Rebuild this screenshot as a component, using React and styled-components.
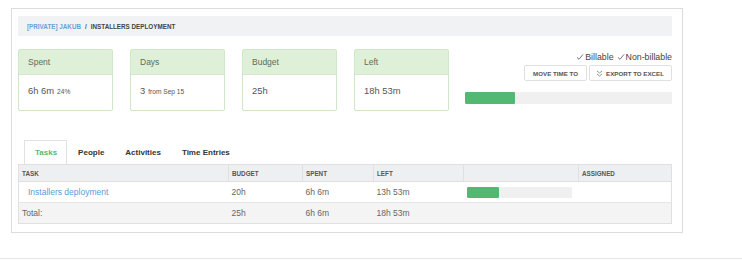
import React from 'react';
import styled, { createGlobalStyle } from 'styled-components';

const GlobalStyle = createGlobalStyle`
  html, body {
    margin: 0;
    padding: 0;
    background: #ffffff;
    font-family: "Liberation Sans", Arial, sans-serif;
    color: #555;
  }
`;

const stats = [
  { title: 'Spent', value: '6h 6m', note: '24%' },
  { title: 'Days', value: '3', note: 'from Sep 15' },
  { title: 'Budget', value: '25h' },
  { title: 'Left', value: '18h 53m' },
];

const tabs = ['Tasks', 'People', 'Activities', 'Time Entries'];

const CheckIcon = () => (
  <svg width="8" height="8" viewBox="0 0 8 8" fill="none">
    <path d="M1 4.4 L3 6.3 L7 1.4" stroke="#777" strokeWidth="1" />
  </svg>
);

const ChevronsDown = () => (
  <svg width="7" height="7" viewBox="0 0 7 7" fill="none">
    <path d="M1 1 L3.5 3 L6 1 M1 4 L3.5 6 L6 4" stroke="#888" strokeWidth="0.9" />
  </svg>
);

const App = () => {
  return (
    <Page>
      <GlobalStyle />
      <Panel>
        <Breadcrumb>
          <Crumb href="#">[PRIVATE] JAKUB</Crumb>
          <Sep>/</Sep>
          <Current>INSTALLERS DEPLOYMENT</Current>
        </Breadcrumb>

        <Summary>
          <Cards>
            {stats.map((s) => (
              <Card key={s.title}>
                <CardHead>{s.title}</CardHead>
                <CardBody>
                  {s.value}
                  {s.note && <Small>{s.note}</Small>}
                </CardBody>
              </Card>
            ))}
          </Cards>

          <Side>
            <Filters>
              <Check><CheckIcon />Billable</Check>
              <Check><CheckIcon />Non-billable</Check>
            </Filters>
            <Buttons>
              <Button>MOVE TIME TO</Button>
              <Button $icon><ChevronsDown />EXPORT TO EXCEL</Button>
            </Buttons>
            <Progress $h={12}>
              <Fill style={{ width: '24%' }} />
            </Progress>
          </Side>
        </Summary>

        <Tabs>
          {tabs.map((t, i) => (
            <Tab key={t} $active={i === 0}>{t}</Tab>
          ))}
        </Tabs>

        <Table>
          <colgroup>
            <col style={{ width: 210 }} />
            <col style={{ width: 74 }} />
            <col style={{ width: 71 }} />
            <col style={{ width: 90 }} />
            <col style={{ width: 115 }} />
            <col />
          </colgroup>
          <thead>
            <tr>
              <Th>TASK</Th>
              <Th>BUDGET</Th>
              <Th>SPENT</Th>
              <Th>LEFT</Th>
              <Th />
              <Th>ASSIGNED</Th>
            </tr>
          </thead>
          <tbody>
            <tr>
              <Td><TaskLink href="#">Installers deployment</TaskLink></Td>
              <Td>20h</Td>
              <Td>6h 6m</Td>
              <Td>13h 53m</Td>
              <Td>
                <Progress $h={11} $w={105}>
                  <Fill style={{ width: '31%' }} />
                </Progress>
              </Td>
              <Td />
            </tr>
            <TotalRow>
              <Td>Total:</Td>
              <Td>25h</Td>
              <Td>6h 6m</Td>
              <Td>18h 53m</Td>
              <Td />
              <Td />
            </TotalRow>
          </tbody>
        </Table>
      </Panel>
      <Divider />
    </Page>
  );
};

const Page = styled.div`
  padding: 8px 0 0 11px;
  width: 742px;
  box-sizing: border-box;
`;

const Panel = styled.div`
  width: 672px;
  box-sizing: border-box;
  border: 1px solid #dcdcdc;
  padding: 7px 10px 8px 6px;
`;

const Breadcrumb = styled.div`
  display: flex;
  align-items: center;
  height: 20px;
  background: #f1f2f4;
  padding-left: 9px;
  font-size: 6.3px;
  font-weight: bold;
`;

const Crumb = styled.a`
  color: #6a9fd8;
  text-decoration: none;
`;

const Sep = styled.span`
  color: #555;
  margin: 0 4px;
`;

const Current = styled.span`
  color: #444;
`;

const Summary = styled.div`
  display: flex;
  gap: 16px;
  margin-top: 13px;
  height: 62px;
`;

const Cards = styled.div`
  display: flex;
  gap: 17px;
`;

const Card = styled.div`
  width: 95px;
  height: 62px;
  box-sizing: border-box;
  border: 1px solid #cfe7c6;
  border-radius: 2px;
  background: #fff;
`;

const CardHead = styled.div`
  height: 24px;
  background: #dff0d8;
  border-bottom: 1px solid #d3e8cb;
  padding-left: 9px;
  display: flex;
  align-items: center;
  font-size: 8.5px;
  color: #5a6e5c;
`;

const CardBody = styled.div`
  padding: 10px 0 0 9px;
  font-size: 9.4px;
  color: #555;
`;

const Small = styled.span`
  font-size: 6.6px;
  margin-left: 3px;
`;

const Side = styled.div`
  flex: 1;
  display: flex;
  flex-direction: column;
  align-items: flex-end;
  padding-top: 2px;
`;

const Filters = styled.div`
  display: flex;
  gap: 3px;
  font-size: 8.8px;
  color: #444;
  height: 12px;
  align-items: center;
`;

const Check = styled.span`
  display: inline-flex;
  align-items: center;
  gap: 1px;
`;

const Buttons = styled.div`
  display: flex;
  gap: 2px;
  margin-top: 2px;
`;

const Button = styled.button`
  height: 16px;
  box-sizing: border-box;
  border: 1px solid #e0e0e0;
  background: #fff;
  border-radius: 2px;
  padding: ${({ $icon }) => ($icon ? '0 7px 0 6px' : '0 8px')};
  font-family: inherit;
  font-size: 6.2px;
  font-weight: bold;
  color: #555;
  display: inline-flex;
  align-items: center;
  gap: 3px;
`;

const Progress = styled.div`
  width: ${({ $w }) => ($w ? `${$w}px` : '100%')};
  height: ${({ $h }) => $h}px;
  background: #f0f0f0;
  border-radius: 1px;
  margin-top: ${({ $w }) => ($w ? 0 : 11)}px;
  overflow: hidden;
`;

const Fill = styled.div`
  height: 100%;
  background: #52b872;
  border-radius: 1px;
`;

const Tabs = styled.div`
  display: flex;
  margin: 29px 0 0 6px;
  height: 24px;
`;

const Tab = styled.div`
  box-sizing: border-box;
  height: 24px;
  padding: 0 9px 0 10px;
  display: flex;
  align-items: center;
  font-size: 8px;
  font-weight: bold;
  color: ${({ $active }) => ($active ? '#5cb870' : '#333')};
  border: 1px solid ${({ $active }) => ($active ? '#e2e2e2' : 'transparent')};
  border-bottom: none;
  background: #fff;
`;

const Table = styled.table`
  width: 100%;
  table-layout: fixed;
  border-collapse: collapse;
  border: 1px solid #e0e0e0;
  font-size: 8.5px;
  color: #666;
`;

const Th = styled.th`
  height: 16px;
  padding: 0 3px;
  text-align: left;
  background: #eeeff1;
  border: 1px solid #e0e0e0;
  font-size: 6.3px;
  font-weight: bold;
  color: #555;
`;

const Td = styled.td`
  height: 20px;
  padding: 0 3px;
  border-top: 1px solid #e6e6e6;
  vertical-align: middle;
`;

const TotalRow = styled.tr`
  background: #f4f4f4;
`;

const TaskLink = styled.a`
  color: #5a9bd8;
  text-decoration: none;
  margin-left: 6px;
`;

const Divider = styled.div`
  margin: 25px 0 0 -11px;
  width: 742px;
  height: 1px;
  background: #e4e4e4;
`;

export default App;
